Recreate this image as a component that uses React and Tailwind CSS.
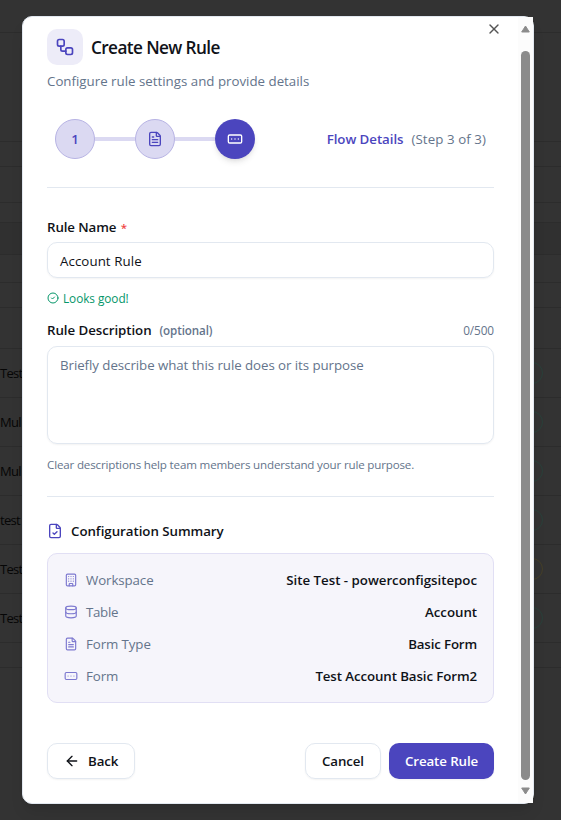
import { ArrowLeft, Building, CircleCheck, Database, FileCheck, FileText, RectangleEllipsis, Workflow, X } from "lucide-react";

const backdropRows = [
  { h: "h-[33px]" },
  { h: "h-[109px]" },
  { h: "h-[25px]" },
  { h: "h-[36px]" },
  { h: "h-[20px]" },
  { h: "h-[32px]", fill: "bg-[#303030]" },
  { h: "h-[28px]" },
  { h: "h-[25px]" },
  { h: "h-[41px]" },
  { h: "h-[49px]", text: "Test", pill: "border-[#2a403a]" },
  { h: "h-[49px]", text: "Mul", pill: "border-[#2a403a]" },
  { h: "h-[49px]", text: "Mul", pill: "border-[#2a403a]" },
  { h: "h-[49px]", text: "test", pill: "border-[#2a403a]" },
  { h: "h-[49px]", text: "Test", pill: "border-[#453f28]" },
  { h: "h-[49px]", text: "Test", pill: "border-[#2a403a]" },
  { h: "h-[25px]" },
];

function Backdrop() {
  return (
    <div className="flex flex-col">
      {backdropRows.map((row, i) => (
        <div key={i} className={`flex shrink-0 items-center justify-between border-b border-[#2c2c2c] pr-[18px] ${row.h} ${row.fill ?? ""}`}>
          <span className="pt-0.5 text-[13px] tracking-[-0.75px] text-[#060606]">{row.text}</span>
          {row.pill && <span className={`h-[22px] w-[60px] rounded-full border ${row.pill}`} />}
        </div>
      ))}
    </div>
  );
}

const summary = [
  { Icon: Building, label: "Workspace", value: "Site Test - powerconfigsitepoc", ls: "tracking-[-0.1px]", vs: "tracking-[-0.02px]" },
  { Icon: Database, label: "Table", value: "Account", ls: "tracking-[-0.3px]", vs: "tracking-[-0.05px]" },
  { Icon: FileText, label: "Form Type", value: "Basic Form", ls: "tracking-[-0.1px]", vs: "tracking-[-0.15px]" },
  { Icon: RectangleEllipsis, label: "Form", value: "Test Account Basic Form2", ls: "tracking-[-0.1px]", vs: "tracking-[-0.1px]" },
];

function Steps() {
  return (
    <div className="flex h-10 items-center justify-between px-2">
      <div className="flex items-center">
        <div className="flex size-10 items-center justify-center rounded-full border border-[#b7b3e4] bg-[#dbd9f2] pt-px text-[13.3px] font-semibold text-[#4b45be]">1</div>
        <div className="h-1 w-10 bg-[#dbd9f2]" />
        <div className="flex size-10 items-center justify-center rounded-full border border-[#b7b3e4] bg-[#dbd9f2] text-[#4b45be]">
          <FileText size={16} />
        </div>
        <div className="h-1 w-10 bg-[#dbd9f2]" />
        <div className="flex size-10 items-center justify-center rounded-full bg-[#4b45be] text-white shadow-md">
          <RectangleEllipsis size={16} />
        </div>
      </div>
      <div className="flex items-center gap-2 whitespace-nowrap pt-0.5 text-[13.3px]">
        <span className="font-semibold tracking-[-0.06px] text-[#4b45be]">Flow Details</span>
        <span className="tracking-[0.08px] text-[#64748b]">(Step 3 of 3)</span>
      </div>
    </div>
  );
}

function Scrollbar() {
  return (
    <div className="flex w-[15px] shrink-0 flex-col items-center bg-[#fcfcfc] pt-2 pb-[7.5px]">
      <svg width="9" height="8" viewBox="0 0 9 8"><path d="M4.5 1 8.3 7H.7Z" fill="#8b8b8b" stroke="#8b8b8b" strokeLinejoin="round" /></svg>
      <div className="mt-[18px] mb-[7.5px] w-[9px] flex-1 rounded-full bg-[#8b8b8b]" />
      <svg width="9" height="8" viewBox="0 0 9 8"><path d="M4.5 7 .7 1h7.6Z" fill="#8b8b8b" stroke="#8b8b8b" strokeLinejoin="round" /></svg>
    </div>
  );
}

export default function App() {
  return (
    <div className="relative h-[820px] w-[561px] overflow-hidden bg-[#333333] font-['Open_Sans','Noto_Sans',sans-serif] text-[#0f1218]">
      <Backdrop />
      <div className="absolute top-[15.5px] left-[22px] flex h-[788px] w-[512px] rounded-[10px] border border-[#e2e8f0] bg-white shadow-lg">
        <div className="flex min-w-0 flex-1 flex-col px-6 pt-[12.5px]">
          <div className="relative flex items-center gap-2">
            <div className="flex size-9 items-center justify-center rounded-[10px] bg-[#edecf8] text-[#4b45be]">
              <Workflow size={20} />
            </div>
            <h2 className="whitespace-nowrap pt-0.5 text-[17.2px] font-semibold tracking-[-0.6px]">Create New Rule</h2>
            <X size={16} className="absolute -top-2 right-[-8px] text-[#555]" />
          </div>
          <p className="mt-1.5 h-5 whitespace-nowrap text-[13.3px] leading-5 tracking-normal text-[#64748b]">Configure rule settings and provide details</p>
          <div className="mt-[28px]">
            <Steps />
          </div>
          <div className="mt-7 h-px shrink-0 bg-[#e2e8f0]" />

          <label className="mt-[29px] h-5 text-[13.3px] leading-5 font-semibold tracking-[-0.1px]">
            Rule Name <span className="ml-px text-[11.5px] text-[#ef4444]">*</span>
          </label>
          <div className="mt-[5px] flex h-9 shrink-0 items-center rounded-[10px] border border-[#e2e8f0] px-3 pt-[3px] text-[13.3px] tracking-[0.07px] shadow-xs">Account Rule</div>
          <div className="mt-3 flex h-4 items-center gap-1 text-[11.8px] tracking-[-0.05px] text-[#059669]">
            <CircleCheck size={12} />
            <span className="pt-px">Looks good!</span>
          </div>
          <div className="mt-[14px] flex h-5 items-center justify-between pt-px">
            <div className="flex items-center gap-2">
              <span className="text-[13.3px] font-semibold tracking-[-0.06px]">Rule Description</span>
              <span className="pt-px text-[11.6px] font-semibold tracking-[-0.1px] text-[#64748b]">(optional)</span>
            </div>
            <span className="text-[11.8px] tracking-[-0.1px] text-[#64748b]">0/500</span>
          </div>
          <div className="mt-1.5 h-[98px] shrink-0 rounded-[10px] border border-[#e2e8f0] px-3 py-2 text-[13.3px] leading-5 tracking-[-0.06px] text-[#64748b] shadow-xs">
            Briefly describe what this rule does or its purpose
          </div>
          <p className="mt-[13px] h-4 text-[11.6px] leading-4 tracking-[-0.17px] text-[#64748b]">Clear descriptions help team members understand your rule purpose.</p>
          <div className="mt-[23px] h-px shrink-0 bg-[#e2e8f0]" />

          <div className="mt-6 flex h-5 items-center gap-2">
            <FileCheck size={16} className="text-[#4b45be]" />
            <h3 className="pt-0.5 text-[13.3px] font-semibold tracking-[-0.04px]">Configuration Summary</h3>
          </div>
          <div className="mt-3 flex h-[150px] shrink-0 flex-col gap-3 rounded-[10px] border border-[#e1dff4] bg-[#f6f5fb] p-4">
            {summary.map(({ Icon, label, value, ls, vs }) => (
              <div key={label} className="flex h-5 items-center justify-between whitespace-nowrap text-[13.3px]">
                <div className="flex items-center gap-2 text-[#64748b]">
                  <Icon size={14} className="text-[#4b45be] opacity-70" />
                  <span className={`pt-0.5 ${ls}`}>{label}</span>
                </div>
                <span className={`pt-0.5 font-semibold ${vs}`}>{value}</span>
              </div>
            ))}
          </div>

          <div className="mt-10 flex h-9 items-center text-[13.3px] font-semibold tracking-[-0.1px] whitespace-nowrap">
            <button className="flex h-9 w-[88px] items-center gap-2 rounded-[10px] border border-[#e2e8f0] pl-4 shadow-xs">
              <ArrowLeft size={16} />
              <span className="pt-0.5">Back</span>
            </button>
            <button className="ml-auto h-9 w-[76px] rounded-[10px] border border-[#e2e8f0] pt-0.5 shadow-xs">Cancel</button>
            <button className="ml-2 h-9 w-[105px] rounded-[10px] bg-[#4b45be] pt-0.5 text-white shadow-xs">Create Rule</button>
          </div>
        </div>
        <Scrollbar />
      </div>
    </div>
  );
}
